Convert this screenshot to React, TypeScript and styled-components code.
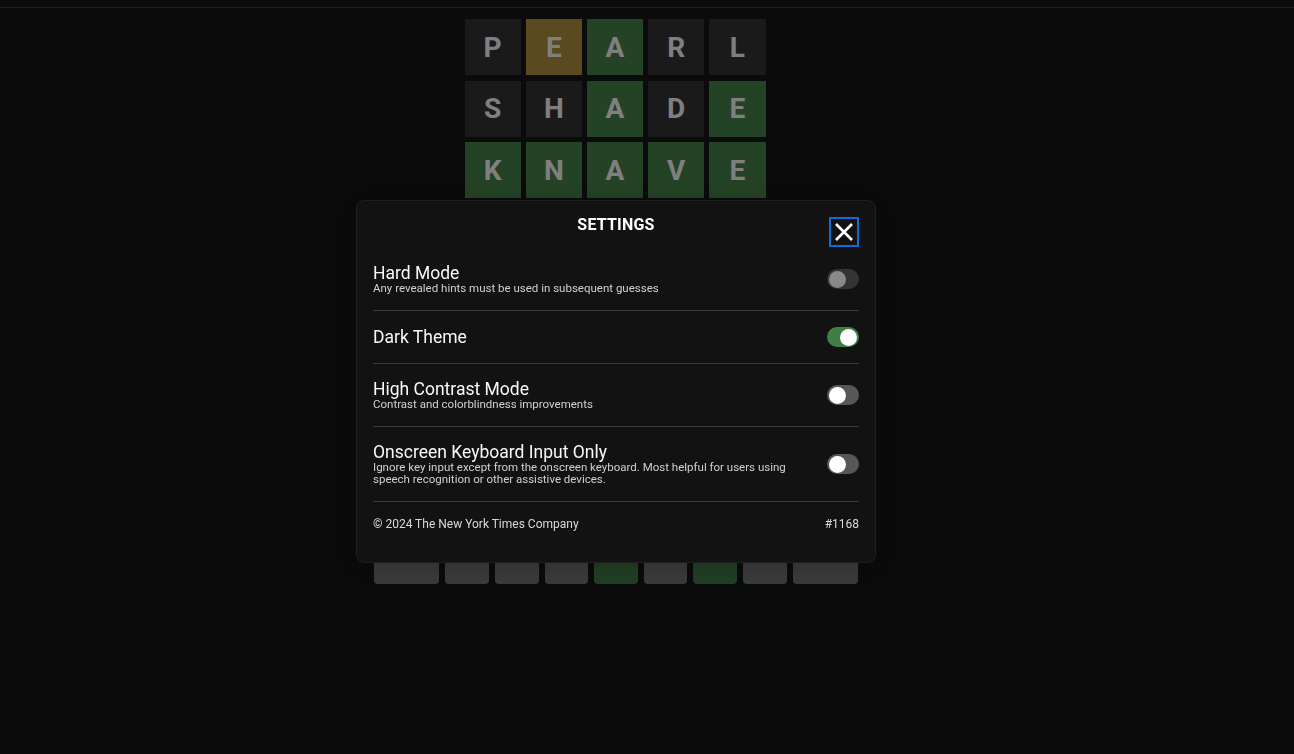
import React from "react";
import styled, { createGlobalStyle } from "styled-components";

const GlobalStyle = createGlobalStyle`
  html, body { margin: 0; padding: 0; height: 100%; overflow: hidden; }
  body { background: #161616; font-family: Roboto, "Liberation Sans", sans-serif; color: #ffffff; }
  #root { height: 100%; }
  * { box-sizing: border-box; }
`;

type TileState = "absent" | "present" | "correct" | "empty";
type KeyState = "absent" | "present" | "correct" | "unused";

const tileColors: Record<TileState, string> = {
  absent: "#343435",
  present: "#b4943e",
  correct: "#48844c",
  empty: "transparent",
};

const keyColors: Record<KeyState, string> = {
  absent: "#3a3a3c",
  present: "#b4943e",
  correct: "#427e48",
  unused: "#747678",
};

const Page = styled.div`
  display: flex;
  flex-direction: column;
  height: 100vh;
  background: #161616;
`;

const TopBar = styled.header`
  height: 8px;
  border-bottom: 1px solid #3e3e3e;
  flex-shrink: 0;
`;

const Main = styled.main`
  display: flex;
  flex-direction: column;
  align-items: center;
  padding-right: 64px;
`;

const Board = styled.div`
  margin-top: 11px;
  width: 301px;
  display: grid;
  grid-template-columns: repeat(5, 1fr);
  grid-auto-rows: 56px;
  column-gap: 5px;
  row-gap: 5.5px;
`;

const Tile = styled.div<{ $state: TileState }>`
  display: flex;
  align-items: center;
  justify-content: center;
  background: ${(p) => tileColors[p.$state]};
  border: ${(p) => (p.$state === "empty" ? "2px solid #3a3a3c" : "none")};
  color: #fefefe;
  font-family: Roboto, "Liberation Sans", sans-serif;
  font-weight: 700;
  font-size: 28px;
  text-transform: uppercase;
`;

const Keyboard = styled.div`
  margin-top: 11.5px;
  margin-left: 2px;
  width: 484px;
  display: flex;
  flex-direction: column;
  gap: 8px;
`;

const KeyRow = styled.div`
  display: flex;
  gap: 6px;
`;

const Spacer = styled.div`
  flex: 0.5;
`;

const Key = styled.div<{ $wide?: boolean; $state: KeyState }>`
  flex: ${(p) => (p.$wide ? 1.5 : 1)};
  height: 58px;
  border-radius: 4px;
  background: ${(p) => keyColors[p.$state]};
  display: flex;
  align-items: center;
  justify-content: center;
  color: #fff;
  font-weight: 700;
  font-size: ${(p) => (p.$wide ? "12px" : "20px")};
  text-transform: uppercase;
`;

const Overlay = styled.div`
  position: fixed;
  inset: 0;
  background: rgba(0, 0, 0, 0.5);
  display: flex;
  justify-content: center;
  align-items: flex-start;
  padding-top: 200px;
  padding-right: 62px;
`;

const Modal = styled.div`
  width: 520px;
  background: #121213;
  border: 1px solid #1f1f20;
  border-radius: 8px;
  padding: 16px 16px 16px;
  box-shadow: 0 4px 23px 0 rgba(0, 0, 0, 0.2);
  display: flex;
  flex-direction: column;
`;

const ModalHeader = styled.div`
  display: grid;
  grid-template-columns: 30px 1fr 30px;
  height: 31px;
`;

const ModalTitle = styled.h2`
  grid-column: 2;
  margin: 0;
  text-align: center;
  font-size: 16px;
  line-height: 16px;
  font-weight: 700;
  letter-spacing: 0.2px;
  text-transform: uppercase;
  color: #ffffff;
`;

const CloseButton = styled.button`
  grid-column: 3;
  width: 30px;
  height: 30px;
  padding: 0;
  background: transparent;
  border: 2px solid #0f6bd6;
  display: flex;
  align-items: center;
  justify-content: center;
  cursor: pointer;

  svg {
    flex-shrink: 0;
    display: block;
  }
`;

const SettingRow = styled.div`
  display: flex;
  align-items: center;
  justify-content: space-between;
  padding: 16px 0;
  border-bottom: 1px solid #3a3a3c;
`;

const SettingText = styled.div`
  display: flex;
  flex-direction: column;
  max-width: 432px;
`;

const SettingTitle = styled.div`
  font-size: 17.5px;
  line-height: 18px;
  color: #f8f8f8;
`;

const SettingDesc = styled.div`
  font-size: 11.5px;
  line-height: 12px;
  color: #d0d0d0;
`;

const Switch = styled.div<{ $on?: boolean; $disabled?: boolean }>`
  width: 32px;
  height: 20px;
  border-radius: 10px;
  padding: 2px;
  display: flex;
  justify-content: ${(p) => (p.$on ? "flex-end" : "flex-start")};
  align-items: center;
  background: ${(p) => (p.$on ? "#3f7f47" : "#565758")};
  opacity: ${(p) => (p.$disabled ? 0.5 : 1)};
  flex-shrink: 0;
`;

const Knob = styled.div`
  width: 17px;
  height: 17px;
  border-radius: 50%;
  background: #ffffff;
`;

const Footer = styled.div`
  display: flex;
  justify-content: space-between;
  padding-top: 16px;
  padding-bottom: 16px;
`;

const FooterText = styled.div`
  font-size: 12px;
  line-height: 12px;
  color: #d7dadc;
`;

const rows: { letter: string; state: TileState }[][] = [
  [
    { letter: "p", state: "absent" },
    { letter: "e", state: "present" },
    { letter: "a", state: "correct" },
    { letter: "r", state: "absent" },
    { letter: "l", state: "absent" },
  ],
  [
    { letter: "s", state: "absent" },
    { letter: "h", state: "absent" },
    { letter: "a", state: "correct" },
    { letter: "d", state: "absent" },
    { letter: "e", state: "correct" },
  ],
  [
    { letter: "k", state: "correct" },
    { letter: "n", state: "correct" },
    { letter: "a", state: "correct" },
    { letter: "v", state: "correct" },
    { letter: "e", state: "correct" },
  ],
];

const keyStates: Record<string, KeyState> = {
  p: "absent",
  e: "correct",
  a: "correct",
  r: "absent",
  l: "absent",
  s: "absent",
  h: "absent",
  d: "absent",
  k: "correct",
  n: "correct",
  v: "correct",
};

const kbRows = ["qwertyuiop", "asdfghjkl", "zxcvbnm"];

const CloseIcon = () => (
  <svg width="22" height="22" viewBox="0 0 22 22" aria-hidden="true">
    <path
      d="M3 3L19 19M19 3L3 19"
      stroke="#ffffff"
      strokeWidth="2.6"
      strokeLinecap="butt"
      fill="none"
    />
  </svg>
);

const settings = [
  {
    title: "Hard Mode",
    desc: "Any revealed hints must be used in subsequent guesses",
    on: false,
    disabled: true,
  },
  { title: "Dark Theme", desc: "", on: true, disabled: false },
  {
    title: "High Contrast Mode",
    desc: "Contrast and colorblindness improvements",
    on: false,
    disabled: false,
  },
  {
    title: "Onscreen Keyboard Input Only",
    desc: "Ignore key input except from the onscreen keyboard. Most helpful for users using speech recognition or other assistive devices.",
    on: false,
    disabled: false,
  },
];

export default function App() {
  const allRows = [...rows];
  while (allRows.length < 6) {
    allRows.push(Array.from({ length: 5 }, () => ({ letter: "", state: "empty" as TileState })));
  }
  return (
    <>
      <GlobalStyle />
      <Page>
        <TopBar />
        <Main>
          <Board>
            {allRows.flatMap((row, r) =>
              row.map((t, c) => (
                <Tile key={`${r}-${c}`} $state={t.state}>
                  {t.letter}
                </Tile>
              ))
            )}
          </Board>
          <Keyboard>
            {kbRows.map((row, i) => (
              <KeyRow key={row}>
                {i === 1 && <Spacer />}
                {i === 2 && (
                  <Key $wide $state="unused">
                    enter
                  </Key>
                )}
                {row.split("").map((k) => (
                  <Key key={k} $state={keyStates[k] ?? "unused"}>
                    {k}
                  </Key>
                ))}
                {i === 1 && <Spacer />}
                {i === 2 && (
                  <Key $wide $state="unused">
                    ⌫
                  </Key>
                )}
              </KeyRow>
            ))}
          </Keyboard>
        </Main>
      </Page>
      <Overlay>
        <Modal>
          <ModalHeader>
            <ModalTitle>Settings</ModalTitle>
            <CloseButton aria-label="Close">
              <CloseIcon />
            </CloseButton>
          </ModalHeader>
          {settings.map((s) => (
            <SettingRow key={s.title}>
              <SettingText>
                <SettingTitle>{s.title}</SettingTitle>
                {s.desc && <SettingDesc>{s.desc}</SettingDesc>}
              </SettingText>
              <Switch $on={s.on} $disabled={s.disabled}>
                <Knob />
              </Switch>
            </SettingRow>
          ))}
          <Footer>
            <FooterText>© 2024 The New York Times Company</FooterText>
            <FooterText>#1168</FooterText>
          </Footer>
        </Modal>
      </Overlay>
    </>
  );
}
